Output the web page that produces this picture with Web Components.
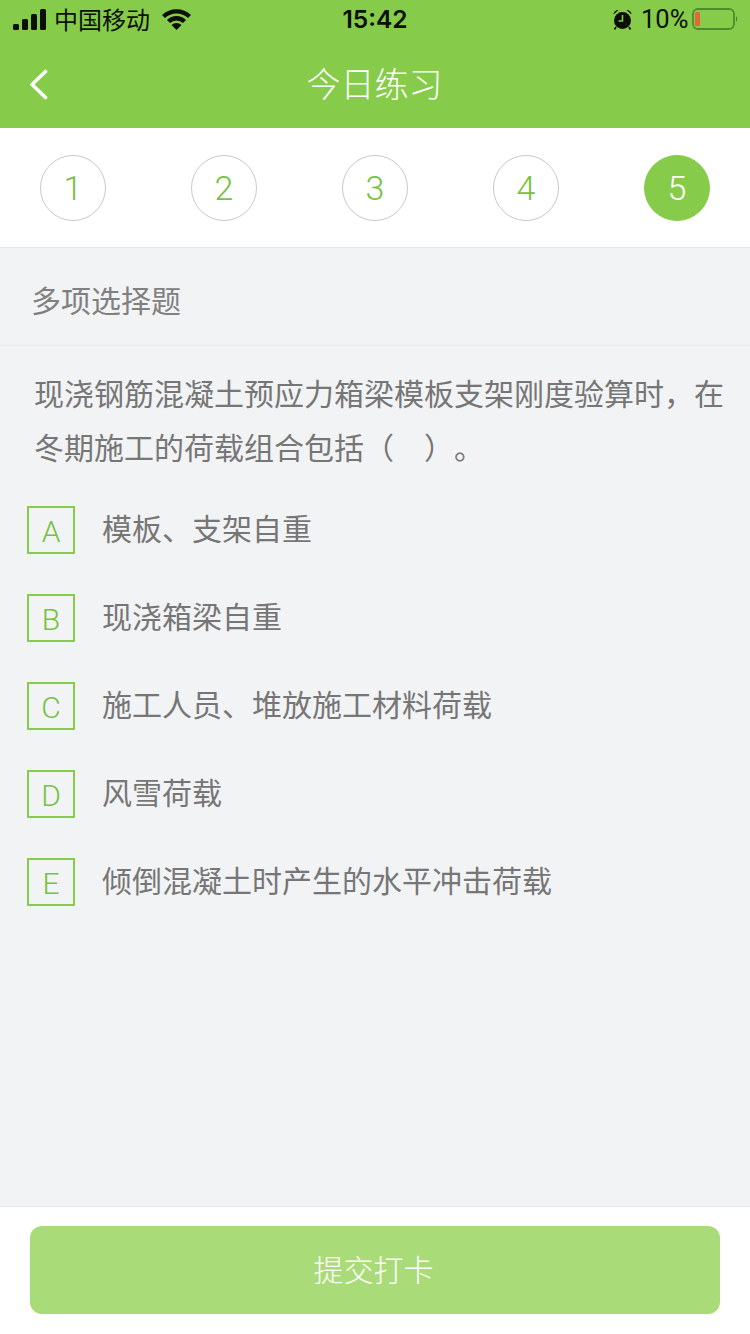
<!DOCTYPE html>
<html lang="zh">
<head>
<meta charset="utf-8">
<title>今日练习</title>
<style>
html, body {
  margin: 0;
  padding: 0;
  height: 100%;
  background: #f2f3f5;
  font-family: "Liberation Sans", "Noto Sans CJK SC", sans-serif;
}
</style>
</head>
<body>
<practice-page>
  <status-bar slot="top"></status-bar>
  <nav-bar slot="top" title="今日练习"></nav-bar>
  <step-row slot="top" count="5" active="5"></step-row>
  <question-head>多项选择题</question-head>
  <question-text>现浇钢筋混凝土预应力箱梁模板支架刚度验算时，在冬期施工的荷载组合包括（　）。</question-text>
  <option-row letter="A">模板、支架自重</option-row>
  <option-row letter="B">现浇箱梁自重</option-row>
  <option-row letter="C">施工人员、堆放施工材料荷载</option-row>
  <option-row letter="D">风雪荷载</option-row>
  <option-row letter="E">倾倒混凝土时产生的水平冲击荷载</option-row>
  <submit-bar slot="bottom">提交打卡</submit-bar>
</practice-page>

<script>
const pageTemplate = document.createElement("template");
pageTemplate.innerHTML = `
<style>
:host {
  display: flex;
  flex-direction: column;
  height: 1334px;
  background: #f2f3f5;
}
.main {
  flex: 1;
}
</style>
<slot name="top"></slot>
<div class="main"><slot></slot></div>
<slot name="bottom"></slot>
`;

class PracticePage extends HTMLElement {
  constructor() {
    super();
    this.attachShadow({ mode: "open" }).append(pageTemplate.content.cloneNode(true));
  }
}
customElements.define("practice-page", PracticePage);

const statusTemplate = document.createElement("template");
statusTemplate.innerHTML = `
<style>
:host {
  display: grid;
  grid-template-columns: 1fr auto 1fr;
  align-items: center;
  box-sizing: border-box;
  height: 40px;
  padding-bottom: 2px;
  background: #86cc4a;
  color: #0b0f06;
  font-size: 24px;
  font-family: "Liberation Sans", "Noto Sans CJK SC", sans-serif;
}
.left, .right { display: flex; align-items: center; }
.left { padding-left: 13px; }
.right { justify-content: flex-end; padding-right: 12px; }
.carrier { margin-left: 8px; width: 97px; white-space: nowrap; position: relative; top: -1px; }
.wifi { margin-left: 11px; }
.time { font-family: Inter, "Liberation Sans", sans-serif; font-weight: 600; font-size: 24.500px; }
.pct { margin-left: 9px; font-family: Roboto, sans-serif; font-size: 25.500px; width: 46px; white-space: nowrap; }
.alarm, .battery { display: block; }
.battery { margin-left: 5px; }
</style>
<div class="left">
  <svg width="33" height="21" viewBox="0 0 33 21">
    <rect x="0" y="15" width="6" height="6" rx="1.500" fill="#0b0f06"/>
    <rect x="9" y="10" width="6" height="11" rx="1.500" fill="#0b0f06"/>
    <rect x="18" y="5" width="6" height="16" rx="1.500" fill="#0b0f06"/>
    <rect x="27" y="0" width="6" height="21" rx="1.500" fill="#0b0f06"/>
  </svg>
  <span class="carrier">中国移动</span>
  <svg class="wifi" width="29" height="21" viewBox="0 0 29 21">
    <path d="M1.500 7.500 A19 19 0 0 1 27.500 7.500" fill="none" stroke="#0b0f06" stroke-width="4.400"/>
    <path d="M6.500 12.500 A11.500 11.500 0 0 1 22.500 12.500" fill="none" stroke="#0b0f06" stroke-width="4.400"/>
    <path d="M9.500 16 L14.500 21 L19.500 16 A7 7 0 0 0 9.500 16 Z" fill="#0b0f06"/>
  </svg>
</div>
<span class="time">15:42</span>
<div class="right">
  <svg class="alarm" width="19" height="21" viewBox="0 0 19 21">
    <path d="M0.500 5.500 A4.500 4.500 0 0 1 5.500 1 Z M18.500 5.500 A4.500 4.500 0 0 0 13.500 1 Z" fill="#0b0f06"/>
    <circle cx="9.500" cy="11.500" r="8.500" fill="#0b0f06"/>
    <path d="M9.500 6 V12 H5.500" fill="none" stroke="#86cc4a" stroke-width="1.600"/>
    <path d="M3 18 L1.500 20.500 M16 18 L17.500 20.500" stroke="#0b0f06" stroke-width="1.600"/>
  </svg>
  <span class="pct">10%</span>
  <svg class="battery" width="46" height="22" viewBox="0 0 46 22">
    <rect x="1" y="1" width="41" height="20" rx="5" fill="none" stroke="#4f8a2b" stroke-width="1.800"/>
    <rect x="3" y="4" width="5" height="14" rx="1.500" fill="#e5653a"/>
    <path d="M44 8 A4 4 0 0 1 44 14 Z" fill="#4f8a2b"/>
  </svg>
</div>
`;

class StatusBar extends HTMLElement {
  constructor() {
    super();
    this.attachShadow({ mode: "open" }).append(statusTemplate.content.cloneNode(true));
  }
}
customElements.define("status-bar", StatusBar);

const navTemplate = document.createElement("template");
navTemplate.innerHTML = `
<style>
:host {
  display: flex;
  position: relative;
  align-items: center;
  justify-content: center;
  box-sizing: border-box;
  height: 88px;
  padding: 0 1px 4px 0;
  background: #86cc4a;
  color: #fff;
  font-size: 34px;
  font-family: "Noto Sans CJK SC", sans-serif;
  font-weight: 300;
}
svg {
  position: absolute;
  left: 29px;
  top: 29px;
}
h1 { margin: 0; font: inherit; }
</style>
<svg width="20" height="32" viewBox="0 0 20 32">
  <path d="M16.500 2.500 L3 15.500 L16.500 28.500" fill="none" stroke="#fff" stroke-width="3.600" stroke-linecap="round" stroke-linejoin="round"/>
</svg>
<h1></h1>
`;

class NavBar extends HTMLElement {
  constructor() {
    super();
    this.attachShadow({ mode: "open" }).append(navTemplate.content.cloneNode(true));
  }

  connectedCallback() {
    this.shadowRoot.querySelector("h1").textContent = this.getAttribute("title");
  }
}
customElements.define("nav-bar", NavBar);

const stepsTemplate = document.createElement("template");
stepsTemplate.innerHTML = `
<style>
:host {
  display: flex;
  justify-content: space-between;
  align-items: center;
  box-sizing: border-box;
  height: 120px;
  padding: 1px 40px 0;
  background: #fff;
  border-bottom: 1px solid #e4e5e7;
}
.step {
  box-sizing: border-box;
  width: 66px;
  height: 66px;
  padding-bottom: 1px;
  border: 1px solid #c9c9c9;
  border-radius: 50%;
  display: flex;
  align-items: center;
  justify-content: center;
  color: #76c23e;
  font-size: 34px;
  font-family: Roboto, "Liberation Sans", sans-serif;
  font-weight: 300;
}
.step.on {
  background: #86cc4a;
  border-color: #86cc4a;
  color: #fff;
}
</style>
`;

class StepRow extends HTMLElement {
  constructor() {
    super();
    this.attachShadow({ mode: "open" }).append(stepsTemplate.content.cloneNode(true));
  }

  connectedCallback() {
    const count = Number(this.getAttribute("count"));
    const active = Number(this.getAttribute("active"));
    for (let i = 1; i <= count; i++) {
      const step = document.createElement("div");
      step.className = i === active ? "step on" : "step";
      step.textContent = i;
      this.shadowRoot.appendChild(step);
    }
  }
}
customElements.define("step-row", StepRow);

const headTemplate = document.createElement("template");
headTemplate.innerHTML = `
<style>
:host {
  display: flex;
  align-items: center;
  box-sizing: border-box;
  height: 98px;
  padding: 4px 0 0 31px;
  border-bottom: 1px solid #e6e7e9;
  color: #808080;
  font-size: 30px;
  font-family: "Noto Sans CJK SC", sans-serif;
  font-weight: 400;
}
</style>
<slot></slot>
`;

class QuestionHead extends HTMLElement {
  constructor() {
    super();
    this.attachShadow({ mode: "open" }).append(headTemplate.content.cloneNode(true));
  }
}
customElements.define("question-head", QuestionHead);

const textTemplate = document.createElement("template");
textTemplate.innerHTML = `
<style>
:host {
  display: block;
  padding: 19px 21px 13px 34px;
  color: #767676;
  font-size: 30px;
  line-height: 54px;
  font-family: "Noto Sans CJK SC", sans-serif;
  font-weight: 400;
  text-spacing-trim: space-all;
}
</style>
<slot></slot>
`;

class QuestionText extends HTMLElement {
  constructor() {
    super();
    this.attachShadow({ mode: "open" }).append(textTemplate.content.cloneNode(true));
  }
}
customElements.define("question-text", QuestionText);

const optionTemplate = document.createElement("template");
optionTemplate.innerHTML = `
<style>
:host {
  display: flex;
  align-items: center;
  height: 88px;
  padding-left: 27px;
  color: #767676;
  font-size: 30px;
  font-family: "Noto Sans CJK SC", sans-serif;
  font-weight: 400;
  text-spacing-trim: space-all;
}
.letter {
  box-sizing: border-box;
  flex: none;
  width: 48px;
  height: 48px;
  padding-top: 2px;
  margin-right: 27px;
  border: 2px solid #86cc4a;
  display: flex;
  align-items: center;
  justify-content: center;
  color: #76c23e;
  font-size: 30px;
  font-family: Roboto, "Liberation Sans", sans-serif;
  font-weight: 300;
}
.label { position: relative; top: -3px; }
</style>
<span class="letter"></span>
<span class="label"><slot></slot></span>
`;

class OptionRow extends HTMLElement {
  constructor() {
    super();
    this.attachShadow({ mode: "open" }).append(optionTemplate.content.cloneNode(true));
  }

  connectedCallback() {
    this.shadowRoot.querySelector(".letter").textContent = this.getAttribute("letter");
  }
}
customElements.define("option-row", OptionRow);

const submitTemplate = document.createElement("template");
submitTemplate.innerHTML = `
<style>
:host {
  display: block;
  box-sizing: border-box;
  height: 128px;
  padding: 19px 30px 20px;
  background: #fff;
  border-top: 1px solid #e8e9eb;
}
button {
  display: block;
  width: 100%;
  height: 88px;
  padding: 0 3px 4px 0;
  border: 0;
  border-radius: 12px;
  background: #a9dc78;
  color: #fff;
  font-size: 30px;
  font-family: "Noto Sans CJK SC", sans-serif;
  font-weight: 300;
}
</style>
<button type="button"><slot></slot></button>
`;

class SubmitBar extends HTMLElement {
  constructor() {
    super();
    this.attachShadow({ mode: "open" }).append(submitTemplate.content.cloneNode(true));
  }
}
customElements.define("submit-bar", SubmitBar);
</script>
</body>
</html>
